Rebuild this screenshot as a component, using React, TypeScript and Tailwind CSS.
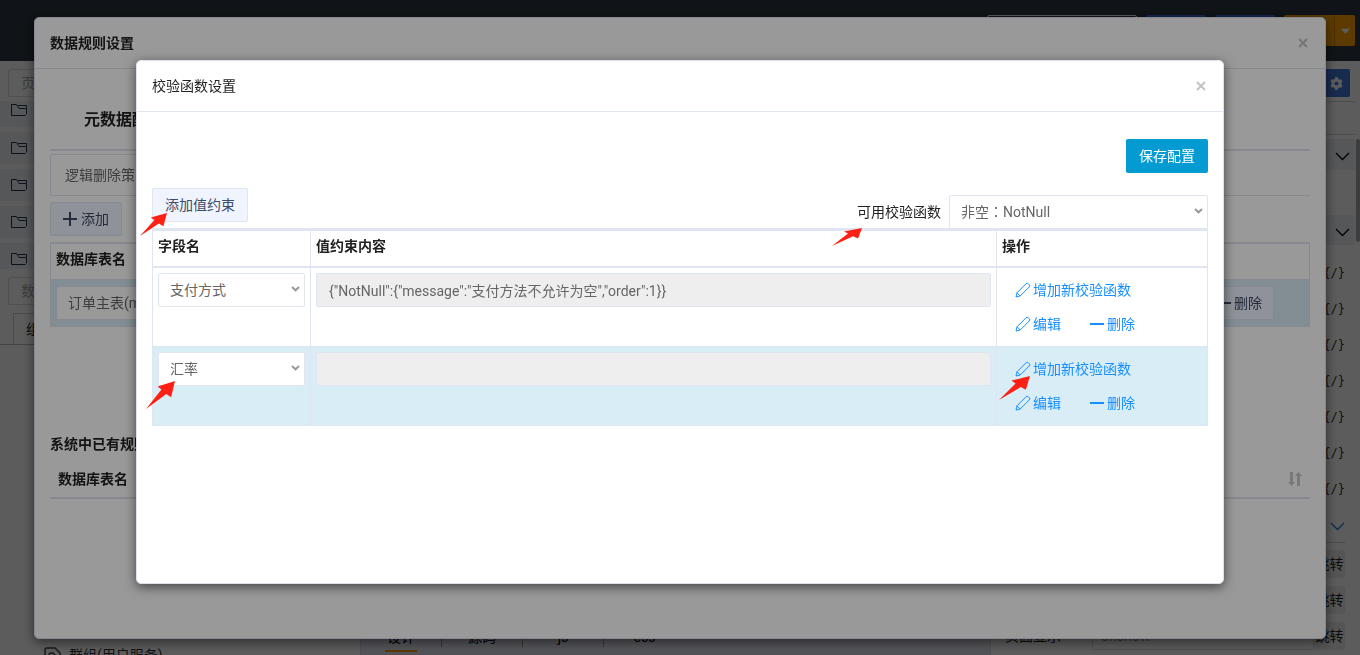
import React, { useState } from "react";
import { FaCaretDown, FaCog } from "react-icons/fa";

interface Constraint {
  id: number;
  field: string;
  content: string;
  active: boolean;
}

const CONSTRAINTS: Constraint[] = [
  {
    id: 1,
    field: "支付方式",
    content: '{"NotNull":{"message":"支付方法不允许为空","order":1}}',
    active: false,
  },
  { id: 2, field: "汇率", content: "", active: true },
];

const EDITOR_TABS = ["设计", "源码", "js", "css"];

const FolderIcon = () => (
  <svg width="17" height="14" viewBox="0 0 17 14" fill="none" stroke="#1f3252">
    <path d="M.5 12.5V1.5H5.5L8 5.5H15.5V11.5M7 2.5H15.5V5M.5 12.5H14.5" />
  </svg>
);

const PencilIcon = () => (
  <svg
    width="16"
    height="16"
    viewBox="0 0 16 16"
    fill="none"
    stroke="currentColor"
    className="shrink-0"
  >
    <path d="M1 15 2 10.8 11 1.8Q12.2.6 13.4 1.8L14.2 2.6Q15.3 3.8 14.2 5L5.2 14ZM2 10.8 5.2 14" />
  </svg>
);

const DashIcon = () => (
  <svg width="16" height="16" viewBox="0 0 16 16" fill="currentColor">
    <path d="M1 7H15V9H1Z" />
  </svg>
);

const PlusIcon = () => (
  <svg width="14" height="14" viewBox="0 0 14 14" fill="currentColor">
    <path d="M6 0H8V6H14V8H8V14H6V8H0V6H6Z" />
  </svg>
);

const ChevronIcon = ({ className }: { className: string }) => (
  <svg
    width="15"
    height="9"
    viewBox="0 0 15 9"
    fill="none"
    stroke="currentColor"
    className={className}
  >
    <path d="M1 1 7.5 7.5 14 1" strokeWidth="1.3" />
  </svg>
);

const CloseIcon = () => (
  <svg width="10" height="10" viewBox="0 0 10 10" fill="none" stroke="#c4c4c4">
    <path d="M1 1 9 9M9 1 1 9" strokeWidth="2" />
  </svg>
);

const SortIcon = () => (
  <svg width="14" height="14" viewBox="0 0 14 14" fill="#c8c8c8">
    <path d="M2 0H5V10H7L3.5 14 0 10H2ZM9 14H12V4H14L10.5 0 7 4H9Z" />
  </svg>
);

const Arrow = ({ className }: { className: string }) => (
  <svg
    viewBox="0 0 30 26"
    preserveAspectRatio="none"
    fill="#ff2015"
    className={`pointer-events-none absolute ${className}`}
  >
    <path d="M0 26 16 8 12 5 30 0 26 15 21 12Z" />
  </svg>
);

interface SelectProps {
  id: string;
  label?: string;
  value: string;
  className?: string;
}

const Select = ({ id, label, value, className = "" }: SelectProps) => (
  <div className={`relative ${className}`}>
    <select
      id={id}
      aria-label={label}
      defaultValue={value}
      className="block h-[34px] w-full appearance-none rounded-xs border border-[#dfe5f1] bg-white pr-6 pl-[11px] text-sm text-[#666] outline-none"
    >
      <option>{value}</option>
    </select>
    <svg
      width="9"
      height="6"
      viewBox="0 0 9 6"
      fill="none"
      stroke="#999"
      className="pointer-events-none absolute top-[13px] right-[5px]"
    >
      <path d="M1 1 4.5 4.3 8 1" strokeWidth="2" />
    </svg>
  </div>
);

const Page = () => (
  <div className="flex h-screen flex-col overflow-hidden bg-white">
    <header className="flex h-[61px] shrink-0 items-start justify-end bg-[#2d3640] pt-[15px] pr-[5px]">
      <input
        aria-label="search"
        className="mr-[9px] h-[31px] w-[150px] rounded-xs border border-white"
      />
      <button className="mr-[9px] h-[31px] w-[60px] rounded-xs bg-[#3a6ed8]" aria-label="save" />
      <button className="mr-[9px] h-[31px] w-[60px] rounded-xs bg-[#3a6ed8]" aria-label="preview" />
      <button className="h-[31px] w-[50px] rounded-l-xs bg-[#ffa200]" aria-label="publish" />
      <button
        aria-label="more"
        className="flex h-[31px] w-[21px] items-center justify-center rounded-r-xs border-l border-[#d08000] bg-[#ffa200] text-white"
      >
        <FaCaretDown size={15} />
      </button>
    </header>

    <div className="flex min-h-0 flex-1">
      <aside className="flex w-[361px] shrink-0 flex-col border-r border-[#dcdcdc]">
        <div className="px-2 pt-2 pb-1">
          <input
            aria-label="页面"
            placeholder="页面"
            className="h-7 w-full rounded-xs border border-[#ddd] px-3 text-sm placeholder:text-[#aaa]"
          />
        </div>
        <ul className="flex h-[168px] flex-col gap-[5px] overflow-hidden">
          {[0, 1, 2, 3, 4].map((i) => (
            <li
              key={i}
              className={`flex shrink-0 items-center bg-[#eff2f5] pl-[11px] ${
                i === 0 ? "h-[26px] pb-2" : "h-8"
              }`}
            >
              <FolderIcon />
            </li>
          ))}
        </ul>
        <div className="px-2 pt-2">
          <input
            aria-label="数据"
            placeholder="数据"
            className="h-7 w-full rounded-xs border border-[#ddd] px-3 text-sm placeholder:text-[#aaa]"
          />
        </div>
        <div className="mt-2 flex border-b border-[#b8bcc4] pl-[13px]">
          <button className="h-[31px] border border-b-0 border-[#ccc] px-3 text-sm text-[#222]">
            组件
          </button>
        </div>
        <div className="mt-auto flex h-2 items-start gap-2 pl-11 text-sm leading-4 text-[#333]">
          <svg width="17" height="17" viewBox="0 0 17 17" fill="none" stroke="#444" className="shrink-0">
            <path d="M1 16V3Q1 1 3 1H11L16 6V16M5 16V8Q5 6 7 6H9L11 8V11H7V9" strokeWidth="1.5" />
          </svg>
          群组(用户服务)
        </div>
      </aside>

      <main className="flex min-w-0 flex-1 flex-col justify-end bg-white">
        <div className="border-b-2 border-[#dfe2ea] bg-[#e8eaf6] pb-[6px]">
          <div className="flex">
            {EDITOR_TABS.map((tab, i) => (
              <button
                key={tab}
                className="flex h-5 w-[81px] justify-center border-r border-[#999] text-sm leading-5 text-black last:border-r-0"
              >
                <span className={i === 0 ? "h-[25px] border-b-2 border-[#ff9900] px-[2px]" : ""}>
                  {tab}
                </span>
              </button>
            ))}
          </div>
        </div>
      </main>

      <aside className="flex w-[370px] shrink-0 border-l border-[#dcdcdc]">
        <div className="flex min-w-0 flex-1 flex-col">
          <div className="flex h-10 justify-end pt-2 pr-[5px]">
            <button
              aria-label="settings"
              className="flex h-7 w-[27px] items-center justify-center rounded-xs bg-[#4278dc] text-white"
            >
              <FaCog size={13} />
            </button>
          </div>
          <div className="h-[34px] border-y border-[#d5d5d5]" />
          <div className="mt-1 flex h-[31px] items-center justify-end bg-[#eff1f6] pr-[5px] text-black">
            <ChevronIcon className="mt-1" />
          </div>
          <div className="mt-[45px] flex h-[30px] items-center justify-end bg-[#eff1f6] pr-[5px] text-black">
            <ChevronIcon className="mt-1" />
          </div>
          <div className="pt-[10px] pr-[10px]">
            {[0, 1, 2, 3, 4, 5, 6].map((i) => (
              <div
                key={i}
                className="flex h-9 items-center justify-end font-['DejaVu_Sans_Mono',monospace] text-xs text-[#333]"
              >
                {"{/}"}
              </div>
            ))}
            <div className="flex h-9 items-center justify-end border-b border-[#ccc] text-[#2878e8]">
              <ChevronIcon className="mt-1" />
            </div>
            <div className="mt-[7px] flex flex-col gap-2">
              {["a", "b", "onshow"].map((v, i) => (
                <div key={v} className="flex h-7 items-center text-sm text-[#222]">
                  <label htmlFor={`event-${v}`} className="w-[101px] shrink-0 pl-[14px]">
                    {i === 2 ? "页面显示" : ""}
                  </label>
                  <input
                    id={`event-${v}`}
                    aria-label={v}
                    defaultValue={i === 2 ? v : ""}
                    className="h-7 min-w-0 flex-1 border border-[#ddd] px-2 text-[#999]"
                  />
                  <button className="h-7 w-[31px] shrink-0 rounded-r-xs bg-[#ececec] text-center text-sm">
                    跳转
                  </button>
                </div>
              ))}
            </div>
          </div>
        </div>
        <div className="w-[5px] shrink-0 pt-[78px]">
          <div className="ml-[1px] h-[103px] rounded-sm bg-[#aaa]" />
        </div>
      </aside>
    </div>
  </div>
);

const RuleDialog = () => (
  <div className="fixed inset-0 flex items-start justify-center bg-black/40 pt-[17px]">
    <section
      role="dialog"
      aria-label="数据规则设置"
      className="h-[95vh] w-[95%] overflow-hidden rounded-[5px] border border-[#dfe2ee] bg-white shadow-[0_3px_12px_rgba(0,0,0,0.55)]"
    >
      <header className="flex h-[51px] items-center justify-between border-b border-[#dfe5f1] pr-[17px] pl-[15px]">
        <h2 className="text-sm font-bold text-[#222]">数据规则设置</h2>
        <button aria-label="close">
          <CloseIcon />
        </button>
      </header>
      <div className="px-[15px] pt-[39px]">
        <h3 className="mb-[17px] pl-[34px] text-base font-bold text-[#222]">元数据配置</h3>
        <div className="border-t-2 border-b border-[#dfe5f1] pt-[3px]">
          <div className="h-[41px] w-[300px] rounded-xs border border-b-0 border-[#dfe5f1] px-[14px] text-sm leading-10 text-[#666]">
            逻辑删除策略
          </div>
        </div>
        <button className="mt-[6px] flex h-[34px] items-center gap-1 rounded-xs border border-[#dfe5f1] bg-[#eff3fd] px-3 text-sm text-[#3c4a63]">
          <PlusIcon />
          添加
        </button>
        <table className="mt-[6px] w-full border border-t-2 border-[#dfe5f1] text-sm">
          <thead>
            <tr className="h-9 border-b border-[#dfe5f1] text-left">
              <th className="px-[5px] pb-1 text-[#222]">数据库表名</th>
              <th />
            </tr>
          </thead>
          <tbody>
            <tr className="bg-[#d9edf7]">
              <td className="px-[5px] py-[6px]">
                <Select id="main-table" label="数据库表名" value="订单主表(main)" className="w-[180px]" />
              </td>
              <td className="pr-[35px]">
                <button className="ml-auto flex h-[34px] items-center gap-[2px] rounded-xs border border-[#dfe5f1] bg-[#eff3fd] px-[11px] text-[#3c4a63]">
                  <DashIcon />
                  删除
                </button>
              </td>
            </tr>
          </tbody>
        </table>
        <h3 className="mt-[107px] text-sm font-bold text-[#222]">系统中已有规则</h3>
        <div className="mt-2 flex h-[37px] items-center justify-between border-b-2 border-[#dfe5f1] px-2 text-sm font-bold text-[#222]">
          数据库表名
          <SortIcon />
        </div>
      </div>
    </section>
  </div>
);

const ValidatorDialog = () => {
  const [rows] = useState<Constraint[]>(CONSTRAINTS);

  return (
    <div className="fixed inset-0 flex items-start justify-center bg-black/40 pt-[60px]">
      <section
        role="dialog"
        aria-label="校验函数设置"
        className="h-[80vh] w-[80%] rounded-[5px] border border-[#dfe2ee] bg-white shadow-[0_3px_12px_rgba(0,0,0,0.55)]"
      >
        <header className="flex h-[51px] items-center justify-between border-b border-[#dfe5f1] pr-[17px] pl-[15px]">
          <h2 className="text-sm text-[#222]">校验函数设置</h2>
          <button aria-label="close">
            <CloseIcon />
          </button>
        </header>

        <div className="px-[15px] pt-[27px]">
          <div className="flex justify-end">
            <button className="h-[34px] rounded-xs bg-[#049bd3] px-[13px] text-sm text-white">
              保存配置
            </button>
          </div>

          <div className="mt-[15px] flex items-start justify-between">
            <div className="relative">
              <button className="h-[34px] rounded-xs border border-[#dfe5f1] bg-[#eff4fe] px-3 text-sm text-[#3d4b66]">
                添加值约束
              </button>
              <Arrow className="top-[25px] -left-3 h-[23px] w-[27px]" />
            </div>
            <div className="relative mt-[7px] flex items-center gap-2">
              <label htmlFor="validator" className="text-sm text-[#222]">
                可用校验函数
              </label>
              <Select
                id="validator"
                value="非空：NotNull"
                className="w-[259px] font-['Roboto','Noto_Sans_CJK_TC',sans-serif]"
              />
              <Arrow className="top-[33px] -left-[25px] h-[18px] w-[30px]" />
            </div>
          </div>

          <table className="-mt-px w-full table-fixed border-collapse border border-t-[3px] border-[#dfe5f1] text-sm">
            <colgroup>
              <col className="w-[158px]" />
              <col />
              <col className="w-[211px]" />
            </colgroup>
            <thead>
              <tr className="h-[37px] border-b-2 border-[#dfe5f1] text-left text-[#222]">
                <th className="border-r border-[#dfe5f1] px-[5px] pb-1">字段名</th>
                <th className="border-r border-[#dfe5f1] px-[5px] pb-1">值约束内容</th>
                <th className="px-[5px] pb-1">操作</th>
              </tr>
            </thead>
            <tbody>
              {rows.map((row) => (
                <tr
                  key={row.id}
                  className={`border-b border-[#dfe5f1] align-top ${
                    row.active ? "bg-[#d9edf7]" : "bg-white"
                  }`}
                >
                  <td className="border-r border-[#dfe5f1] px-[5px] pt-[5px]">
                    <div className="relative">
                      <Select id={`field-${row.id}`} label="字段名" value={row.field} />
                      {row.active && <Arrow className="top-[29px] -left-3 h-[28px] w-[29px]" />}
                    </div>
                  </td>
                  <td className="border-r border-[#dfe5f1] px-[5px] pt-[5px]">
                    <input
                      aria-label="值约束内容"
                      readOnly
                      value={row.content}
                      className="block h-[34px] w-full rounded-xs border border-[#dfe5f1] bg-[#eee] px-3 text-sm text-[#666] outline-none"
                    />
                  </td>
                  <td className="px-[18px] pt-[5px] pb-[5px] text-[#188fff]">
                    <div className="relative flex h-[34px] items-center">
                      <a href="#add" className="flex items-center gap-[2px]">
                        <PencilIcon />
                        增加新校验函数
                      </a>
                      {row.active && <Arrow className="top-[24px] -left-4 h-[24px] w-[31px]" />}
                    </div>
                    <div className="flex h-[34px] items-center gap-7">
                      <a href="#edit" className="flex items-center gap-[2px]">
                        <PencilIcon />
                        编辑
                      </a>
                      <a href="#delete" className="flex items-center gap-[2px]">
                        <DashIcon />
                        删除
                      </a>
                    </div>
                  </td>
                </tr>
              ))}
            </tbody>
          </table>
        </div>
      </section>
    </div>
  );
};

const App: React.FC = () => {
  return (
    <div className="font-['Roboto','Noto_Sans_CJK_SC',sans-serif]">
      <Page />
      <RuleDialog />
      <ValidatorDialog />
    </div>
  );
};

export default App;
